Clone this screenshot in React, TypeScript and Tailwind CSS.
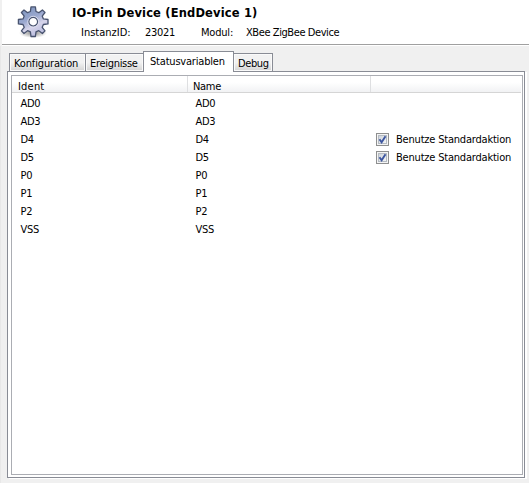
import React from "react";

const rows = [
  { ident: "AD0" },
  { ident: "AD3" },
  { ident: "D4", action: true },
  { ident: "D5", action: true },
  { ident: "P0" },
  { ident: "P1" },
  { ident: "P2" },
  { ident: "VSS" },
];

function Gear() {
  return (
    <svg width="34" height="34" viewBox="0 0 34 34" className="mt-[5px] shrink-0">
      <defs>
        <linearGradient id="gear" x1="0.2" y1="0" x2="0.7" y2="1">
          <stop offset="0" stopColor="#7c93bd" />
          <stop offset="0.4" stopColor="#9aa8cf" />
          <stop offset="0.65" stopColor="#d6d4ea" />
          <stop offset="1" stopColor="#b4b8dc" />
        </linearGradient>
        <radialGradient id="shade">
          <stop offset="0" stopColor="#666" stopOpacity="0.8" />
          <stop offset="1" stopColor="#777" stopOpacity="0" />
        </radialGradient>
      </defs>
      <ellipse cx="17" cy="28" rx="14" ry="5" fill="url(#shade)" />
      <g transform="translate(17.2 16.7)">
        <path
          fill="url(#gear)"
          stroke="#48536f"
          strokeWidth="1.3"
          strokeLinejoin="round"
          fillRule="evenodd"
          d="M-2.2-14.8H2.2L2.8-10.2L5.6-9L9.2-11.8L11.8-9.2L9-5.6L10.2-2.8L14.8-2.2V2.2L10.2 2.8L9 5.6L11.8 9.2L9.2 11.8L5.6 9L2.8 10.2L2.2 14.8H-2.2L-2.8 10.2L-5.6 9L-9.2 11.8L-11.8 9.2L-9 5.6L-10.2 2.8L-14.8 2.2V-2.2L-10.2-2.8L-9-5.6L-11.8-9.2L-9.2-11.8L-5.6-9L-2.8-10.2ZM0-4.4A4.4 4.4 0 1 0 0 4.4A4.4 4.4 0 1 0 0-4.4Z"
        />
        <circle r="5.4" fill="none" stroke="#e4e6f2" strokeWidth="0.8" />
      </g>
    </svg>
  );
}

function Checkbox() {
  return (
    <span className="flex h-[13px] w-[13px] items-center justify-center border border-[#8e8f8f] bg-[#f4f4f4]">
      <span className="flex h-[9px] w-[9px] items-center justify-center border border-[#b5bbc3] bg-linear-to-br from-[#cfd4da] to-[#f3f5f6]">
        <svg width="9" height="9" viewBox="0 0 9 9" className="shrink-0">
          <path d="M1.5 4.3L3.6 7.2L7.5 1.2" fill="none" stroke="#3d56a0" strokeWidth="1.9" />
        </svg>
      </span>
    </span>
  );
}

function Tab({ className, children }: { className: string; children: React.ReactNode }) {
  return (
    <div
      className={
        "h-[19px] border border-[#898c95] bg-linear-to-b from-[#f2f2f2] from-50% to-[#d4d4d4] pl-1 leading-[19px] shadow-[inset_0_0_0_1px_#fafafa] " +
        className
      }
    >
      {children}
    </div>
  );
}

export default function App() {
  return (
    <div className="flex h-[483px] w-[529px] flex-col overflow-hidden bg-[#f0f0f0] font-['DejaVu_Sans_Condensed','DejaVu_Sans',sans-serif] text-[11px] font-stretch-condensed whitespace-nowrap text-black">
      <header className="ml-[2px] flex h-[46px] shrink-0 border-b border-white bg-white pl-[14px] shadow-[inset_0_-1px_0_#a0a0a0]">
        <Gear />
        <div className="ml-[22px]">
          <h1 className="mt-[5px] font-['DejaVu_Sans',sans-serif] text-[11.5px] leading-4 font-bold tracking-[0.16px] font-stretch-normal">
            IO-Pin Device (EndDevice 1)
          </h1>
          <div className="mt-[4px] ml-[9px] flex leading-4">
            <span className="w-[64px]">InstanzID:</span>
            <span className="w-[56px] tracking-[-0.3px]">23021</span>
            <span className="w-[45px] tracking-[-0.2px]">Modul:</span>
            <span className="tracking-[-0.42px]">XBee ZigBee Device</span>
          </div>
        </div>
      </header>
      <div className="flex min-h-0 flex-1 flex-col border-l border-[#e8e8e8] pt-[5px] pr-[4px] pb-[5px] pl-[6px]">
        <nav className="z-10 ml-[2px] flex h-[21px] items-end">
          <Tab className="w-[77px] tracking-[-0.15px]">Konfiguration</Tab>
          <Tab className="-ml-px w-[59px] tracking-[-0.3px]">Ereignisse</Tab>
          <div className="-ml-px h-[21px] w-[91px] border border-b-0 border-[#898c95] bg-white pl-[6px] leading-[19px] tracking-[-0.2px]">
            Statusvariablen
          </div>
          <Tab className="-ml-px w-[40px] tracking-[-0.4px]">Debug</Tab>
        </nav>
        <main className="-mt-px flex flex-1 border border-[#898c95] bg-white p-[3px] pr-[1px] pb-[2px] shadow-[2px_1px_0_#fff]">
          <section className="flex-1 border border-[#abadb3] bg-white">
            <div className="mr-px grid h-[17px] grid-cols-[176px_183px_1fr] grid-rows-[16px] border-b border-[#d5d5d5] bg-linear-to-b from-white from-40% to-[#f1f2f4] leading-[21px]">
              <div className="border-r border-[#dedfe1] pl-[6px] tracking-[0.2px]">Ident</div>
              <div className="border-r border-[#dedfe1] pl-[5px] tracking-[-0.3px]">Name</div>
              <div />
            </div>
            <div className="pt-px">
              {rows.map((row) => (
                <div key={row.ident} className="grid h-[18px] grid-cols-[175px_181px_1fr] items-center pl-[8.5px] leading-4 tracking-[-0.3px]">
                  <span className="pt-[2px]">{row.ident}</span>
                  <span className="pt-[2px]">{row.ident}</span>
                  {row.action && (
                    <label className="-ml-[0.5px] flex items-center gap-[7px] tracking-[-0.2px]">
                      <Checkbox />
                      <span className="pt-[2px]">Benutze Standardaktion</span>
                    </label>
                  )}
                </div>
              ))}
            </div>
          </section>
        </main>
      </div>
    </div>
  );
}
